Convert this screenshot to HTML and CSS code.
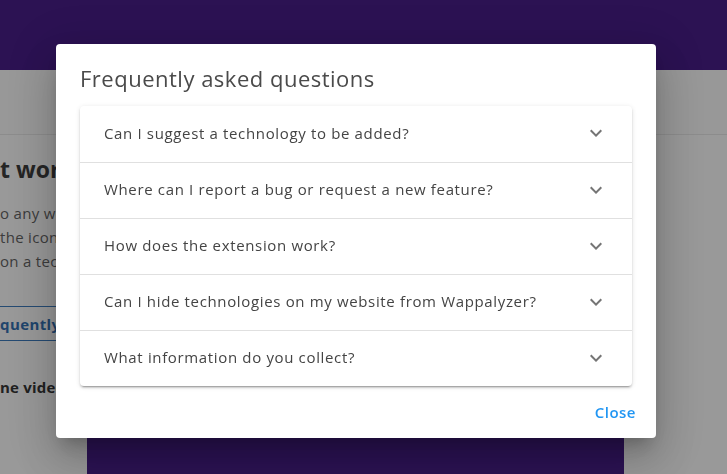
FILE: index.html
```html
<!DOCTYPE html>
<html lang="en">
<head>
<meta charset="utf-8">
<title>Wappalyzer FAQ</title>
<link rel="stylesheet" href="styles.css">
</head>
<body>
<div class="page">
  <header class="topbar"></header>
  <div class="toolbar"></div>
  <main class="content">
    <h2 class="heading">t works</h2>
    <p class="para">o any website<br>the icon in<br>on a technology</p>
    <div class="tabs"><span class="tab">quently asked</span></div>
    <p class="video-label">ne video</p>
    <div class="video"></div>
  </main>
</div>

<div class="overlay">
  <div class="dialog" role="dialog">
    <h1 class="dialog-title">Frequently asked questions</h1>
    <div class="panels">
      <div class="panel">
        <span class="q">Can I suggest a technology to be added?</span>
        <svg class="chev" viewBox="0 0 24 24" width="24" height="24"><path d="M7.41 8.59 12 13.17l4.59-4.58L18 10l-6 6-6-6 1.41-1.41z"/></svg>
      </div>
      <div class="panel">
        <span class="q">Where can I report a bug or request a new feature?</span>
        <svg class="chev" viewBox="0 0 24 24" width="24" height="24"><path d="M7.41 8.59 12 13.17l4.59-4.58L18 10l-6 6-6-6 1.41-1.41z"/></svg>
      </div>
      <div class="panel">
        <span class="q">How does the extension work?</span>
        <svg class="chev" viewBox="0 0 24 24" width="24" height="24"><path d="M7.41 8.59 12 13.17l4.59-4.58L18 10l-6 6-6-6 1.41-1.41z"/></svg>
      </div>
      <div class="panel">
        <span class="q">Can I hide technologies on my website from Wappalyzer?</span>
        <svg class="chev" viewBox="0 0 24 24" width="24" height="24"><path d="M7.41 8.59 12 13.17l4.59-4.58L18 10l-6 6-6-6 1.41-1.41z"/></svg>
      </div>
      <div class="panel">
        <span class="q">What information do you collect?</span>
        <svg class="chev" viewBox="0 0 24 24" width="24" height="24"><path d="M7.41 8.59 12 13.17l4.59-4.58L18 10l-6 6-6-6 1.41-1.41z"/></svg>
      </div>
    </div>
    <div class="actions">
      <button class="close">Close</button>
    </div>
  </div>
</div>
</body>
</html>
```
FILE: styles.css
```css
* { box-sizing: border-box; }
html, body { margin: 0; padding: 0; }
body {
  width: 727px;
  height: 474px;
  overflow: hidden;
  background: #ffffff;
  font-family: "Open Sans", "Lato", sans-serif;
  color: #333;
}
.page { display: flex; flex-direction: column; }
.topbar { height: 70px; background: #36067f; }
.toolbar { height: 65px; border-bottom: 1px solid #e8e8e8; background: #fdfdfd; }
.content { padding-top: 18px; }
.heading {
  margin: 0;
  font-size: 23px;
  line-height: 32px;
  font-weight: 700;
  color: #2a2a2a;
  white-space: nowrap;
}
.para {
  margin: 16px 0 0;
  font-size: 15px;
  line-height: 24px;
  letter-spacing: 0.3px;
  color: #555;
  white-space: nowrap;
}
.tabs {
  margin-top: 33px;
  height: 35px;
  border-top: 1px solid #2a6fb8;
  border-bottom: 1px solid #2a6fb8;
  width: 200px;
  display: flex;
  align-items: center;
}
.tab {
  font-size: 15px;
  font-weight: 700;
  letter-spacing: 0.4px;
  color: #1f64ad;
  white-space: nowrap;
}
.video-label {
  margin: 34px 0 0;
  font-size: 15px;
  line-height: 24px;
  font-weight: 700;
  letter-spacing: 0.2px;
  color: #222;
  white-space: nowrap;
}
.video {
  margin: 20px 0 0 87px;
  width: 537px;
  height: 60px;
  background: #36087f;
}

.overlay {
  position: fixed;
  inset: 0;
  background: rgba(33, 33, 33, 0.46);
}
.dialog {
  position: absolute;
  left: 56px;
  top: 44px;
  width: 600px;
  background: #fff;
  border-radius: 4px;
  box-shadow: 0 11px 15px -7px rgba(0,0,0,.2), 0 24px 38px 3px rgba(0,0,0,.14), 0 9px 46px 8px rgba(0,0,0,.12);
  display: flex;
  flex-direction: column;
}
.dialog-title {
  margin: 0;
  padding: 18px 24px 12px;
  font-size: 22px;
  line-height: 32px;
  font-weight: 400;
  letter-spacing: 0.5px;
  color: #4a4a4a;
}
.panels {
  margin: 0 24px;
  border-radius: 4px;
  box-shadow: 0 3px 1px -2px rgba(0,0,0,.2), 0 2px 2px 0 rgba(0,0,0,.14), 0 1px 5px 0 rgba(0,0,0,.12);
  display: flex;
  flex-direction: column;
}
.panel {
  height: 56px;
  padding: 0 24px;
  display: flex;
  align-items: center;
  justify-content: space-between;
  border-top: 1px solid #e0e0e0;
}
.panel:first-child { border-top: none; }
.q {
  font-size: 15px;
  letter-spacing: 0.65px;
  color: #444;
  margin-top: -3px;
}
.chev { fill: #757575; margin-top: -2px; }
.actions {
  display: flex;
  justify-content: flex-end;
  padding: 8px;
}
.close {
  height: 36px;
  padding: 0 12px;
  border: none;
  background: transparent;
  font-family: inherit;
  font-size: 15px;
  font-weight: 600;
  letter-spacing: 0.5px;
  color: #2196f3;
  cursor: pointer;
}
```
